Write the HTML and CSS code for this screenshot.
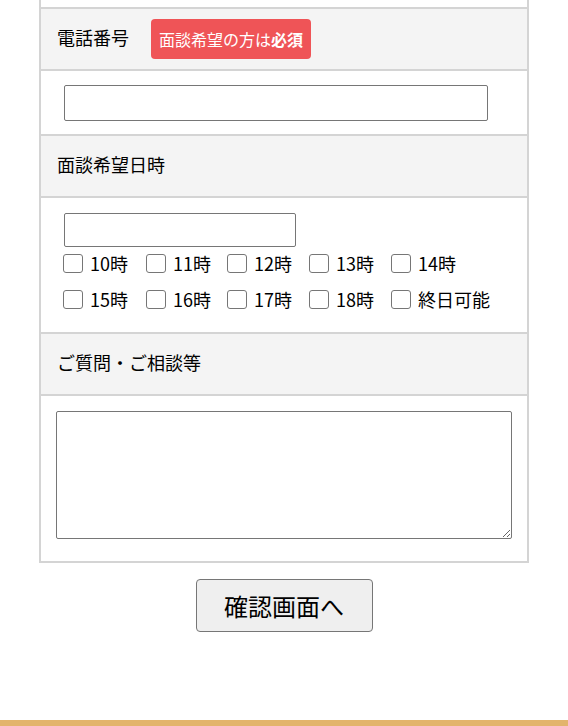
FILE: index.html
```html
<!DOCTYPE html>
<html lang="ja">
<head>
<meta charset="utf-8">
<title>お問い合わせフォーム</title>
<link rel="stylesheet" href="styles.css">
</head>
<body>
<div class="page">
  <table class="form-table">
    <tr class="stub"><td></td></tr>
    <tr><th>電話番号<span class="req">面談希望の方は<b>必須</b></span></th></tr>
    <tr><td class="cell-tel"><input type="tel" class="input-tel"></td></tr>
    <tr><th>面談希望日時</th></tr>
    <tr><td class="cell-date">
      <input type="text" class="input-date">
      <div class="times">
        <label class="time"><input type="checkbox" class="check"><span>10時</span></label>
        <label class="time"><input type="checkbox" class="check"><span>11時</span></label>
        <label class="time"><input type="checkbox" class="check"><span>12時</span></label>
        <label class="time"><input type="checkbox" class="check"><span>13時</span></label>
        <label class="time"><input type="checkbox" class="check"><span>14時</span></label>
        <label class="time"><input type="checkbox" class="check"><span>15時</span></label>
        <label class="time"><input type="checkbox" class="check"><span>16時</span></label>
        <label class="time"><input type="checkbox" class="check"><span>17時</span></label>
        <label class="time"><input type="checkbox" class="check"><span>18時</span></label>
        <label class="time time-wide"><input type="checkbox" class="check"><span>終日可能</span></label>
      </div>
    </td></tr>
    <tr><th>ご質問・ご相談等</th></tr>
    <tr><td class="cell-msg"><textarea class="msg"></textarea></td></tr>
  </table>
  <div class="actions"><button type="button" class="btn-confirm">確認画面へ</button></div>
</div>
<footer class="footer-bar"></footer>
</body>
</html>
```
FILE: styles.css
```css
html, body {
  margin: 0;
  padding: 0;
  background: #fff;
}
body {
  font-family: "Noto Sans CJK JP", "Noto Sans", sans-serif;
  font-size: 18px;
  color: #000;
}
.page {
  width: 490px;
  margin: 0 auto;
}
.form-table {
  width: 490px;
  border-collapse: separate;
  border-spacing: 0;
  border: 1px solid #d4d4d4;
  border-top: none;
}
.form-table th,
.form-table td {
  border: 1px solid #d4d4d4;
  text-align: left;
  font-weight: normal;
  vertical-align: top;
}
.stub td {
  border-top: none;
  height: 7px;
  padding: 0;
  box-sizing: content-box;
}
.form-table th {
  background: #f4f4f4;
  padding: 8px 16px 12px;
  line-height: 40px;
  height: 40px;
  white-space: nowrap;
}
.req {
  display: inline-block;
  vertical-align: top;
  margin: 2px 0 -2px 22px;
  padding: 8px 8px;
  line-height: 24px;
  font-size: 16px;
  color: #fff;
  background: #ef5457;
  border-radius: 4px;
}
.req b {
  font-weight: bold;
}
.cell-tel {
  padding: 14px 15px 13px;
}
.input-tel,
.input-date {
  display: block;
  box-sizing: border-box;
  margin: 0 0 0 8px;
  border: 1px solid #767676;
  border-radius: 2px;
  background: #fff;
  padding: 0 4px;
  font: inherit;
}
.input-tel {
  width: 424px;
  height: 36px;
}
.cell-date {
  padding: 15px 15px 15px;
}
.input-date {
  width: 232px;
  height: 34px;
}
.times {
  display: grid;
  grid-template-columns: 83px 81px 82px 82px 100px;
  grid-auto-rows: 36px;
  margin: -2px 0 0 7px;
}
.time {
  display: flex;
  align-items: center;
  line-height: 24px;
  white-space: nowrap;
}
.check {
  appearance: none;
  -webkit-appearance: none;
  box-sizing: border-box;
  width: 20px;
  height: 19px;
  margin: 0 7px 0 0;
  border: 1px solid #767676;
  border-radius: 3px;
  background: #fff;
}
.cell-msg {
  padding: 15px 15px 22px;
}
.msg {
  display: block;
  box-sizing: border-box;
  width: 456px;
  height: 128px;
  margin: 0;
  border: 1px solid #767676;
  border-radius: 2px;
  font: inherit;
}
.actions {
  display: flex;
  justify-content: center;
  padding-top: 16px;
}
.btn-confirm {
  box-sizing: border-box;
  width: 177px;
  height: 53px;
  padding: 0;
  font-family: "Noto Sans CJK JP", "Noto Sans", sans-serif;
  font-size: 24px;
  color: #000;
  background: #efefef;
  border: 1px solid #767676;
  border-radius: 4px;
}
.footer-bar {
  margin-top: 88px;
  height: 40px;
  background: #e3b46c;
}
```
